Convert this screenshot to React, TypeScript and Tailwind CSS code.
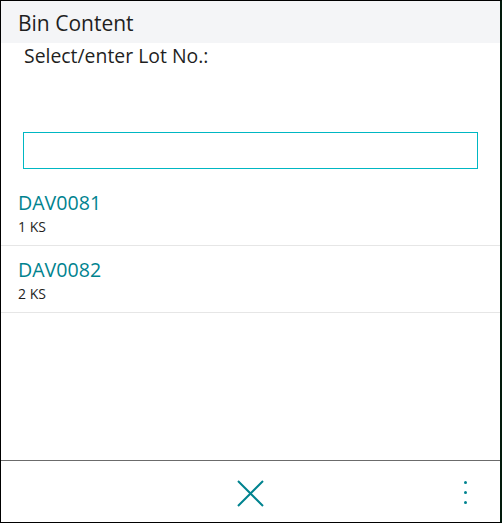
import React from "react";

const items = [
  { lot: "DAV0081", qty: "1 KS" },
  { lot: "DAV0082", qty: "2 KS" },
];

export default function App() {
  return (
    <div
      className="w-[502px] h-[523px] flex flex-col bg-white border-l border-t border-b border-black border-r-2 border-r-[#021a0c] overflow-hidden"
      style={{ fontFamily: '"Open Sans", "Noto Sans", sans-serif' }}
    >
      <div className="h-[42px] shrink-0 bg-[#f4f5f7] flex items-center pl-[17px] text-[21px] text-[#1f1f1f] leading-none pt-[3px]">
        Bin Content
      </div>
      <div className="pl-[23px] pt-[1px] text-[19.4px] leading-[24px] text-[#1f1f1f]">
        Select/enter Lot No.:
      </div>
      <div className="pl-[22px] pr-[22px] pt-[64px]">
        <div className="h-[37px] border border-[#00b7c3] bg-white" />
      </div>
      <div className="pt-[10px] flex flex-col">
        {items.map((it) => (
          <div
            key={it.lot}
            className="h-[67px] border-b border-[#e6e6e6] pl-[17px] pt-[12px]"
          >
            <div className="text-[19.6px] leading-[24px] text-[#00838f]">{it.lot}</div>
            <div className="text-[14px] leading-[18px] text-[#1f1f1f] mt-[3px]">{it.qty}</div>
          </div>
        ))}
      </div>
      <div className="flex-1" />
      <div className="h-[62px] shrink-0 border-t border-[#6b6b6b] relative flex items-center justify-center">
        <svg width="27" height="27" viewBox="0 0 27 27" className="mt-[3px]">
          <path d="M1 1 L26 26 M26 1 L1 26" stroke="#00838f" strokeWidth="2" fill="none" />
        </svg>
        <div className="absolute right-[33px] top-[20px] flex flex-col gap-[7px]">
          <span className="block w-[3px] h-[3px] rounded-full bg-[#00838f]" />
          <span className="block w-[3px] h-[3px] rounded-full bg-[#00838f]" />
          <span className="block w-[3px] h-[3px] rounded-full bg-[#00838f]" />
        </div>
      </div>
    </div>
  );
}
